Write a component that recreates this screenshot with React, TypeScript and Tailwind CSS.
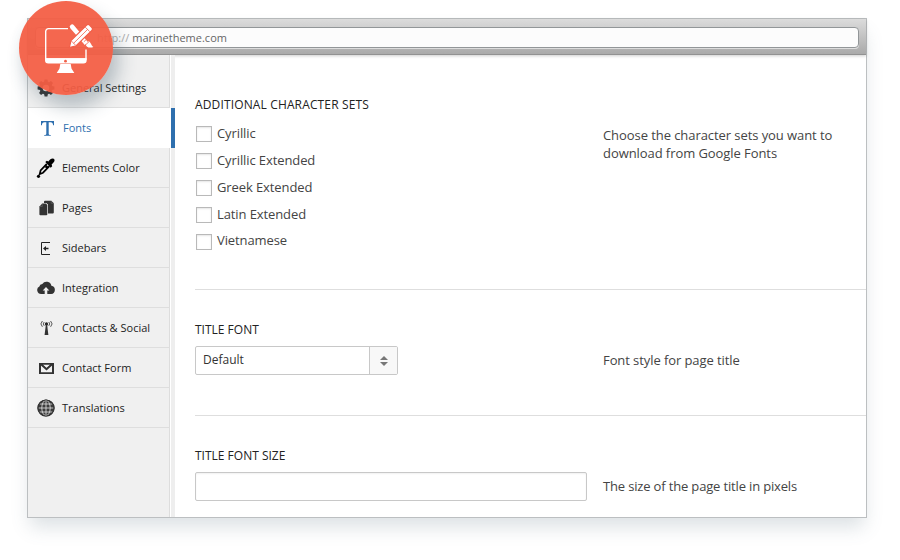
import React from "react";

function GearIcon() {
  const teeth = [0, 45, 90, 135, 180, 225, 270, 315];
  return (
    <svg width="18" height="18" viewBox="0 0 18 18">
      <circle cx="9" cy="9" r="4.900" fill="none" stroke="#333" strokeWidth="3.200" />
      {teeth.map((a) => (
        <path key={a} d="M7 3.400 7.600.6h2.800l.6 2.800z" fill="#333" transform={`rotate(${a} 9 9)`} />
      ))}
    </svg>
  );
}

function FontIcon() {
  return (
    <svg width="18" height="18" viewBox="0 0 18 18" fill="#2e6fae">
      <path d="M3 2h13v4.200h-.9C14.800 4 14.300 3.300 12.500 3.300H10.700V14.700c0 1 .5 1.200 2.100 1.300v.8H6.200v-.8c1.600-.1 2.100-.3 2.100-1.300V3.300H6.500C4.700 3.300 4.200 4 3.900 6.200H3z" />
    </svg>
  );
}

function DropperIcon() {
  return (
    <svg width="20" height="22" viewBox="0 0 20 22">
      <path d="M10.800 6.800 4.600 13.500 3.700 17 7 15.700 13.400 9.200" fill="none" stroke="#000" strokeWidth="1.700" />
      <path d="m9.300 5 1.500-1.300 1.600.7c1.400-1.700 2.600-2.900 4.200-2.900 1.900 0 2.500 1.900 1.500 3.300-.7 1.100-1.800 1.800-2.500 2.700l.6 1.800-1.500 1.400z" fill="#000" />
      <path d="m10.500 8 2.400 2.300-1.800 1.300-2.500-1.400z" fill="#000" />
      <circle cx="2.500" cy="19.300" r="1.600" fill="#000" />
    </svg>
  );
}

function PagesIcon() {
  return (
    <svg width="18" height="18" viewBox="0 0 18 18" fill="#333">
      <path d="M8 1.800h6.300L16.800 4.200v9.300q0 1-1 1H11V5.600L9.300 3.900H7V2.800q0-1 1-1" />
      <path d="M5.300 4.600h3.500l1.500 1.500v9.200q0 1-1 1H3.400q-1 0-1-1V7.500z" />
      <path d="M5.300 4.600v2.900H2.400M14.200 1.800v2.500h2.600" fill="none" stroke="#777" strokeWidth=".5" />
    </svg>
  );
}

function SidebarIcon() {
  return (
    <svg width="18" height="18" viewBox="0 0 18 18">
      <path d="M13 3.500H4.500v12H13" fill="none" stroke="#222" strokeWidth="1" />
      <path d="m6 9.500 3-2.500v1.700h2.500v1.600H9V12z" fill="#222" />
    </svg>
  );
}

function CloudIcon() {
  return (
    <svg width="18" height="18" viewBox="0 0 18 18">
      <path d="M4.200 15a3.900 3.900 0 0 1-1.800-7.400A3 3 0 0 1 5.300 5 5 5 0 0 1 14.400 6.700 4.200 4.200 0 0 1 14.200 15z" fill="#333" />
      <path d="m9 8 3.300 3.600h-2V15.400H7.700v-3.800h-2z" fill="#f0f0f0" />
    </svg>
  );
}

function AntennaIcon() {
  return (
    <svg width="18" height="18" viewBox="0 0 18 18">
      <g fill="none" stroke="#444" strokeWidth=".9">
        <path d="M5.400 2Q2.400 4.900 5.400 7.800M13.600 2q3 2.900 0 5.800M7.200 3Q5.400 4.900 7.200 6.800M11.800 3q1.800 1.900 0 3.800" />
      </g>
      <circle cx="9.500" cy="4.900" r="1.600" fill="#222" />
      <path d="M8.900 5.500h1.200l1.300 10.500H7.600z" fill="#333" />
    </svg>
  );
}

function MailIcon() {
  return (
    <svg width="18" height="18" viewBox="0 0 18 18">
      <path d="M2 4h15v11H2z" fill="#333" />
      <path d="M4 5.800v7.400h11V5.800l-5.500 5z" fill="#f0f0f0" />
      <path d="m5.600 5.700 3.900 3.500 3.900-3.500z" fill="#f0f0f0" />
      <path d="m4 5.300 5.500 5 5.500-5" fill="none" stroke="#333" strokeWidth="1.900" />
    </svg>
  );
}

function GlobeIcon() {
  return (
    <svg width="18" height="18" viewBox="0 0 18 18">
      <circle cx="9" cy="9" r="8.600" fill="#3c3c3c" />
      <g fill="none" stroke="#e4e4e4" strokeWidth=".8">
        <path d="M9 1v16M1 9h16M2.500 5h13M2.500 13h13" />
        <ellipse cx="9" cy="9" rx="4.200" ry="7.700" />
      </g>
      <circle cx="9" cy="9" r="8" fill="none" stroke="#333" strokeWidth="1.200" />
    </svg>
  );
}

const menu = [
  { label: "General Settings", icon: <GearIcon /> },
  { label: "Fonts", icon: <FontIcon />, active: true },
  { label: "Elements Color", icon: <DropperIcon /> },
  { label: "Pages", icon: <PagesIcon /> },
  { label: "Sidebars", icon: <SidebarIcon /> },
  { label: "Integration", icon: <CloudIcon /> },
  { label: "Contacts & Social", icon: <AntennaIcon /> },
  { label: "Contact Form", icon: <MailIcon /> },
  { label: "Translations", icon: <GlobeIcon /> },
];

const charsets = ["Cyrillic", "Cyrillic Extended", "Greek Extended", "Latin Extended", "Vietnamese"];

function Sidebar() {
  return (
    <nav className="flex w-[147px] shrink-0 flex-col bg-[linear-gradient(90deg,#f0f0f0_141px,#dddddd_141px,#dddddd_142px,#fff_142px,#fff_143px,#eeeeee_143px)] pt-[13px]">
      {menu.map((m) => (
        <div key={m.label} className="flex h-10">
          <div
            className={
              m.active
                ? "flex w-[143px] items-center bg-white pl-[9px] text-[#2e6fae]"
                : "mr-px flex w-[142px] items-center border-b border-[#dedede] pt-px pl-2 text-[#222]"
            }
          >
            <span className="flex w-[20px] justify-center">{m.icon}</span>
            <span className={m.active ? "ml-[6px] text-[11px]" : "ml-[6px] whitespace-nowrap pt-px text-[11px]"}>{m.label}</span>
          </div>
          {m.active && <div className="w-1 bg-[#2e6fae]" />}
        </div>
      ))}
    </nav>
  );
}

function Badge() {
  return (
    <div className="absolute top-[1px] left-[19px] h-[94px] w-[94px] rounded-full bg-[#f35d44]/94 shadow-[6px_12px_18px_rgba(60,85,100,0.32)]">
      <svg width="94" height="94" viewBox="19 1 94 94">
        <path d="M68 28.600H48.500a2.800 2.800 0 0 0-2.800 2.800V59H86V49.500" fill="none" stroke="#fff" strokeWidth="1.400" />
        <path d="M45 58.200h41.700v2a3.300 3.300 0 0 1-3.300 3.300H48.300a3.300 3.300 0 0 1-3.300-3.300z" fill="#fff" />
        <circle cx="65.500" cy="61.200" r="1.400" fill="#f15f48" />
        <path d="M60.300 64h10.400l.8 4.500 2.800 4.500H56.700l2.800-4.500z" fill="#fff" />
        <path d="M70.300 28.200a2.300 2.300 0 0 1 3.600-2.900L88 42.200l-3.200 2.900z" fill="#fff" />
        <path d="M85.500 43.700 88.200 41.200c3 .5 2.500 4.200 5.200 5.700-3.300 1.400-7.500.7-7.900-3.200" fill="#fff" />
        <path d="m83.800 41.800 2.400-2.200M84.700 45.700l4.300-4" fill="none" stroke="#f15f48" strokeWidth=".8" />
        <path d="M69.300 47.500 71 40.600 86.700 25.100a2 2 0 0 1 2.800 0l2.400 2.400a2 2 0 0 1 0 2.800L76.200 45.800z" fill="#fff" stroke="#f15f48" strokeWidth="1.200" />
        <path d="M73.500 43.400 87.600 29.400M85.300 27.200l4.500 4.500M71.500 41.100l4.200 4.200" fill="none" stroke="#f15f48" strokeWidth=".8" />
      </svg>
    </div>
  );
}

export default function App() {
  return (
    <div className="relative h-[560px] w-[900px] overflow-hidden bg-white pt-[18px] pl-[27px] font-['Open_Sans','Noto_Sans',sans-serif]">
      <div className="flex h-[500px] w-[840px] flex-col border border-[#bcbfc1] bg-white shadow-[0_12px_18px_-3px_rgba(80,105,120,0.2)]">
        <header className="flex h-9 shrink-0 items-center border-b border-[#929292] bg-linear-to-b from-[#dcdcdc] to-[#aaaaaa] pt-px pr-[7px] pl-[7px] shadow-[0_1px_3px_rgba(0,0,0,0.2)]">
          <div className="flex h-[21px] flex-1 items-center rounded-[4px] border border-[#929698] bg-[#fcfcfc] pt-[2px] pl-[61px] text-[11px] shadow-[0_1px_0_#ddd]">
            <span className="text-[#aaa]">http://</span>
            <span className="ml-[3px] text-[#666]">marinetheme.com</span>
          </div>
        </header>
        <div className="flex min-h-0 flex-1">
          <Sidebar />
          <main className="flex-1 pl-5 text-[13px] text-[#444]">
            <section className="flex h-[235px] border-b border-[#dedede] pt-[41px]">
              <div className="w-[408px]">
                <h2 className="text-[12px] leading-[18px] tracking-[0.14px] text-[#222]">ADDITIONAL CHARACTER SETS</h2>
                <div className="mt-[7px] flex flex-col">
                  {charsets.map((c) => (
                    <label key={c} className="flex h-[26.800px] items-center">
                      <span className="ml-px h-4 w-4 border border-[#b9b9b9] bg-white shadow-[inset_0_1px_2px_rgba(0,0,0,0.1)]" />
                      <span className="ml-[5px] pb-px tracking-[-0.1px]">{c}</span>
                    </label>
                  ))}
                </div>
              </div>
              <p className="mt-[30px] leading-[18px] tracking-[-0.07px]">
                Choose the character sets you want to
                <br />
                download from Google Fonts
              </p>
            </section>
            <section className="flex h-[126px] border-b border-[#dedede] pt-[31px]">
              <div className="w-[408px]">
                <h2 className="text-[12px] leading-[18px] text-[#222]">TITLE FONT</h2>
                <div className="mt-[7px] flex h-[29px] w-[203px] overflow-hidden rounded-[2px] border border-[#c8c8c8]">
                  <span className="flex-1 pl-[7px] text-[12px] leading-[26px] text-[#333]">Default</span>
                  <span className="flex w-[28px] items-center justify-center border-l border-[#c8c8c8] bg-[#f8f8f8]">
                    <svg width="8" height="10" viewBox="0 0 8 10" fill="#777">
                      <path d="M4 0 8 4H0zM4 10l4-4H0z" />
                    </svg>
                  </span>
                </div>
              </div>
              <p className="mt-[30px] leading-[18px] tracking-[-0.08px]">Font style for page title</p>
            </section>
            <section className="flex pt-[31px]">
              <div className="w-[408px]">
                <h2 className="text-[12px] leading-[18px] text-[#222]">TITLE FONT SIZE</h2>
                <div className="mt-[7px] h-[29px] w-[392px] rounded-[2px] border border-[#c8c8c8] shadow-[inset_0_1px_2px_rgba(0,0,0,0.06)]" />
              </div>
              <p className="mt-[30px] leading-[18px] tracking-[-0.16px]">The size of the page title in pixels</p>
            </section>
          </main>
        </div>
      </div>
      <Badge />
    </div>
  );
}
